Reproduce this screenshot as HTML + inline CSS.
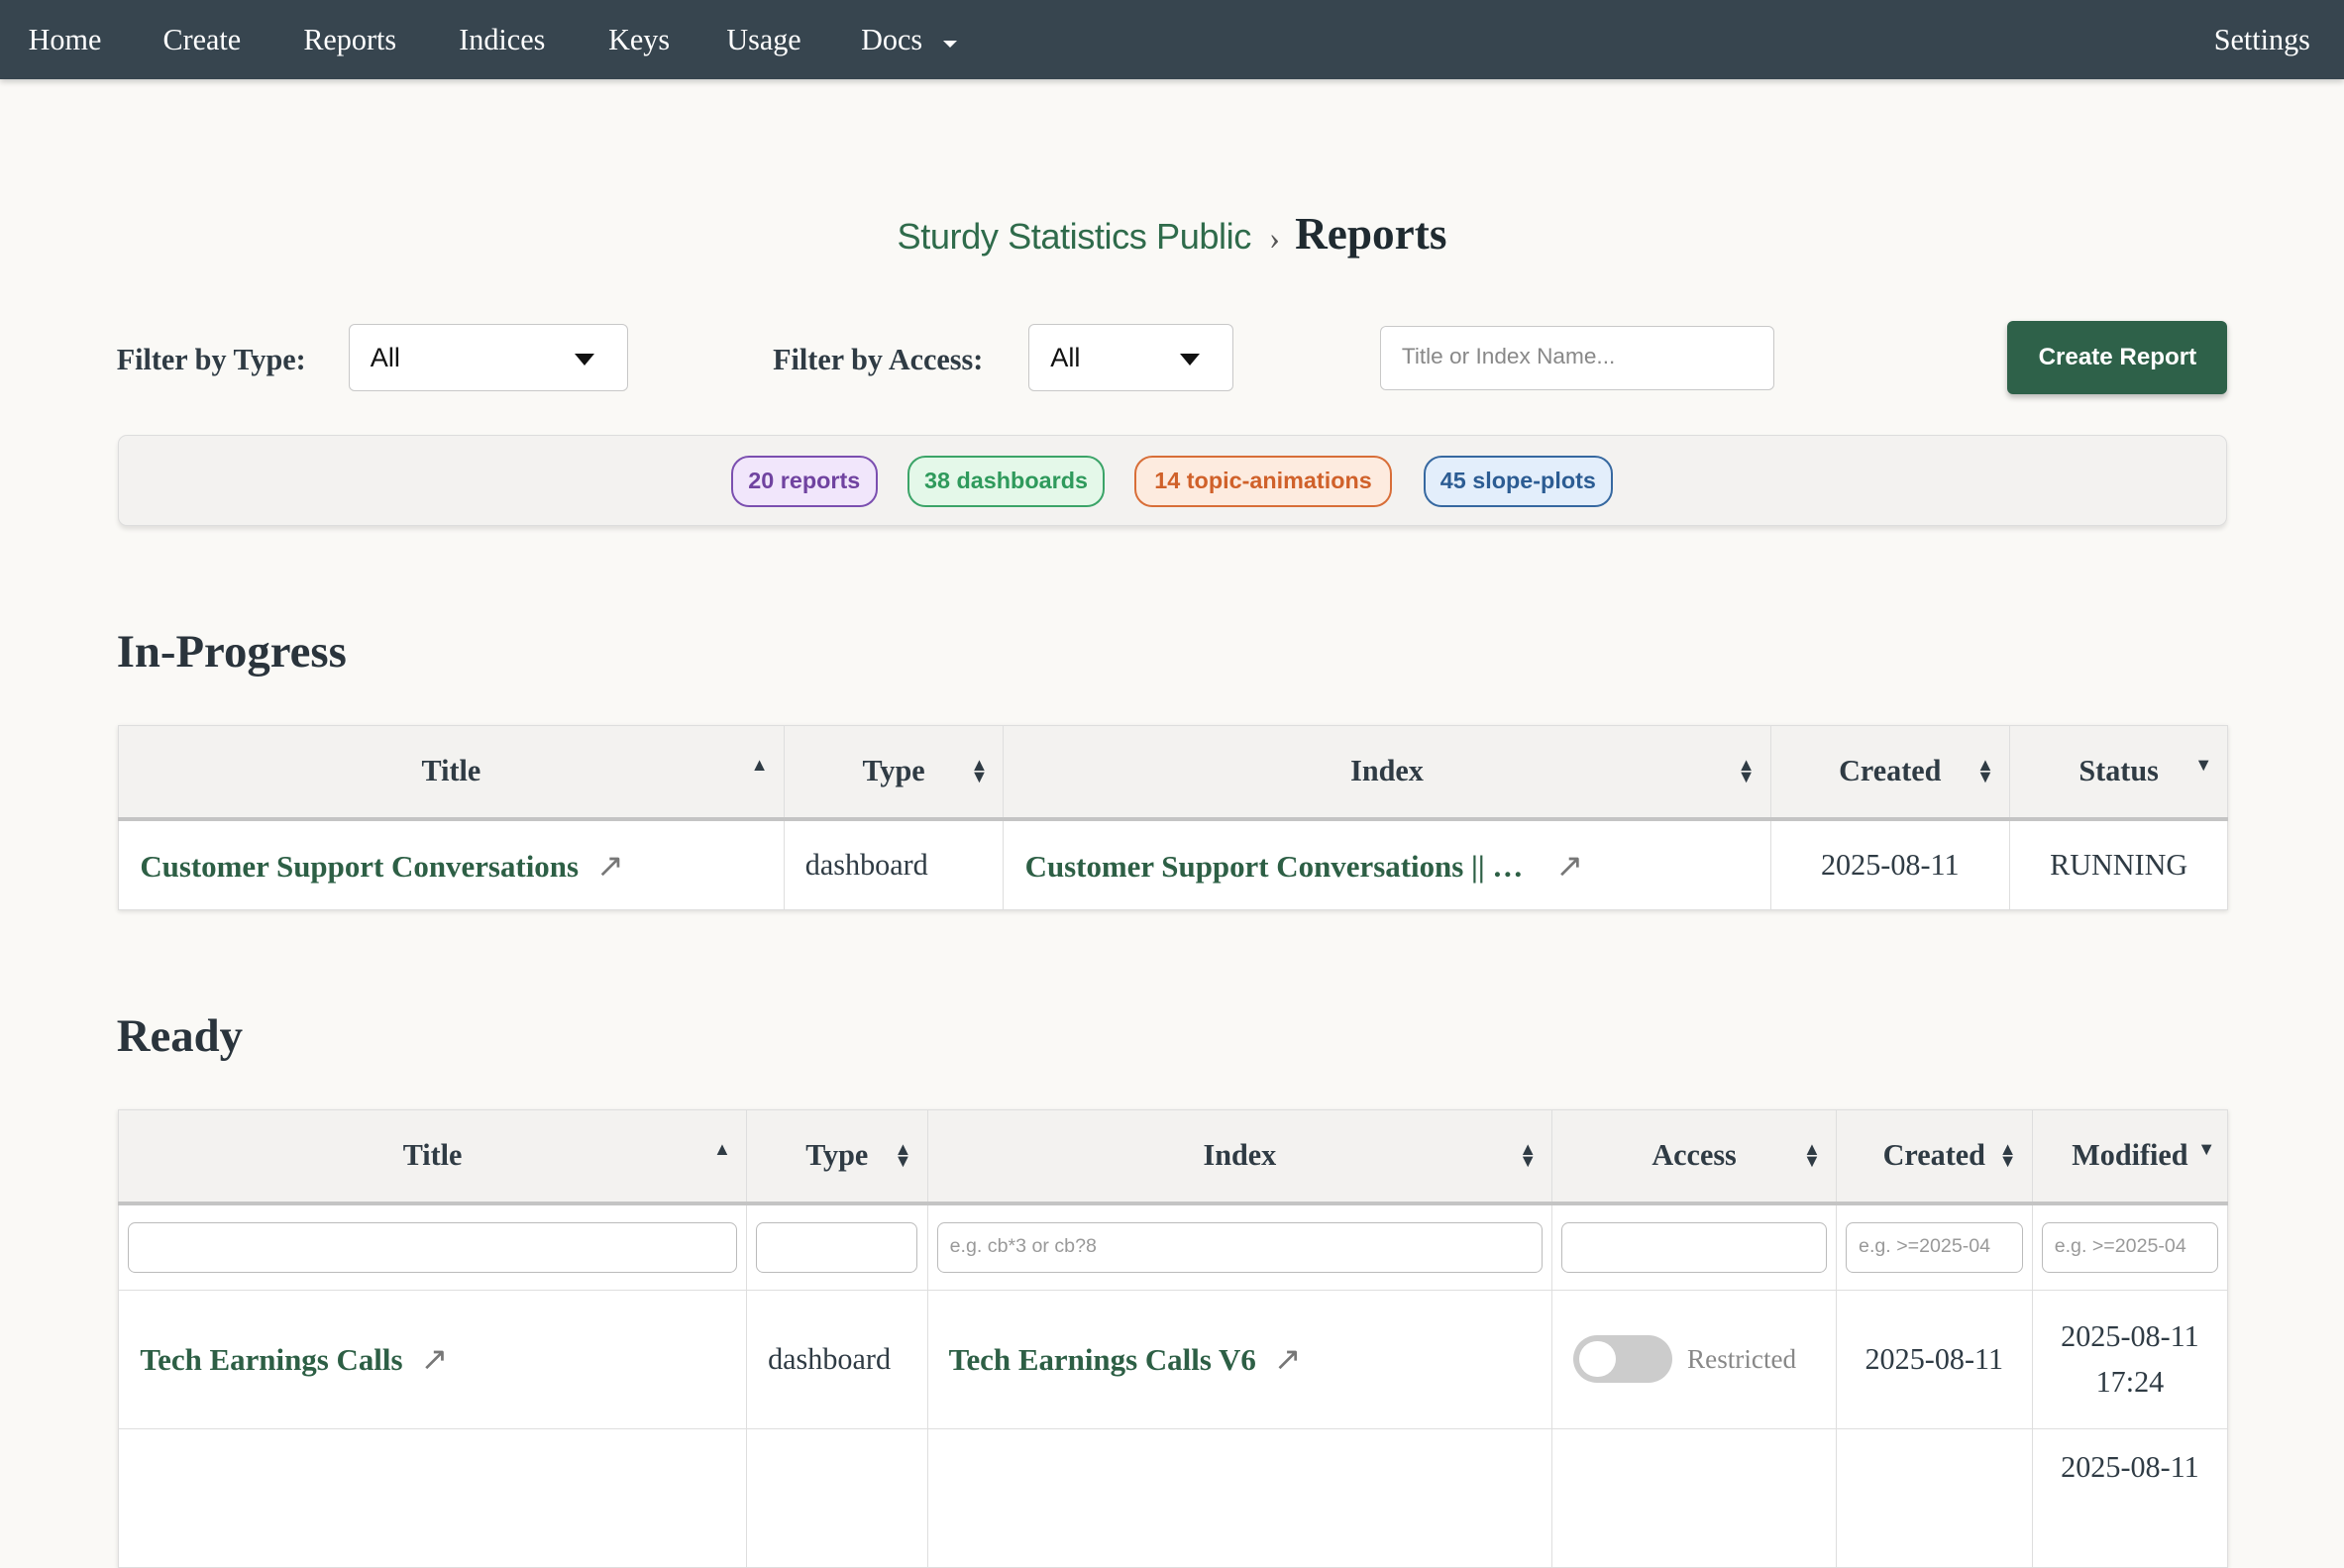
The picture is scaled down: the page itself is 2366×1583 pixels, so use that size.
<!DOCTYPE html>
<html><head><meta charset="utf-8"><style>
html{zoom:1.50893}
body{margin:0;width:1568px;height:983px;overflow:hidden;background:#faf9f6;font-family:"Liberation Serif",serif;color:#2f3b44;position:relative}
.nav{position:absolute;left:0;top:0;width:1568px;height:53px;background:#37454f;box-shadow:0 2px 4px rgba(0,0,0,.2)}
.nav span{position:absolute;top:15px;color:#fff;font-size:20px}
.a{position:absolute}
.sel{position:absolute;background:#fff;border:1px solid #c8c8c8;border-radius:4px;box-sizing:border-box;font-family:"Liberation Sans",sans-serif;font-size:18px;color:#111}
.sel b{position:absolute;right:22px;top:19px;border-left:7px solid transparent;border-right:7px solid transparent;border-top:8px solid #111}
.lbl{position:absolute;font-weight:bold;font-size:20px;color:#2f3b44}
.pill{position:absolute;top:305px;height:34px;box-sizing:border-box;border:1.5px solid;border-radius:12px;font-family:"Liberation Sans",sans-serif;font-weight:bold;font-size:15.5px;line-height:31px;text-align:center}
table{position:absolute;left:79px;border-collapse:collapse;table-layout:fixed;font-size:20px;box-shadow:0 1px 3px rgba(0,0,0,.12)}
td,th{border:1px solid #dedede;padding:0 14px;white-space:nowrap;overflow:hidden}
th{background:#f3f2f0;font-weight:bold;height:61px;border-bottom:3px solid #c4c4c4;position:relative}
td{background:#fff}
.lk{color:#2d5f45;font-weight:bold}
.ar{color:#777;font-weight:normal;margin-left:12px;font-size:22px}
.s{position:absolute;right:10px;top:22px;font-size:12px;line-height:8px}
.fi{height:34px;border:1px solid #bbb;border-radius:5px;box-sizing:border-box;background:#fff;font-family:"Liberation Sans",sans-serif;font-size:13px;color:#999;padding:8px;}
h2{position:absolute;margin:0;font-size:31px;font-weight:bold;color:#2a343c}
</style></head><body>
<div class="nav">
<span style="left:19px">Home</span><span style="left:109px">Create</span><span style="left:203px">Reports</span><span style="left:307px">Indices</span><span style="left:407px">Keys</span><span style="left:486px">Usage</span><span style="left:576px">Docs</span>
<span style="left:631px;top:27px;border-left:5px solid transparent;border-right:5px solid transparent;border-top:5px solid #fff"></span>
<span style="left:1481px">Settings</span>
</div>
<div class="a" style="left:0;width:1568px;top:139px;text-align:center;white-space:nowrap"><span style="font-family:'Liberation Sans',sans-serif;font-size:24px;color:#2f6b4b;letter-spacing:-0.3px">Sturdy Statistics Public</span><span style="font-size:22px;color:#555;margin:0 10px 0 12px">›</span><span style="font-size:30px;font-weight:bold;color:#1f2a30">Reports</span></div>

<div class="lbl" style="left:78px;top:229px">Filter by Type:</div>
<div class="sel" style="left:233px;top:217px;width:187px;height:45px;padding:11px 14px">All<b></b></div>
<div class="lbl" style="left:517px;top:229px">Filter by Access:</div>
<div class="sel" style="left:688px;top:217px;width:137px;height:45px;padding:11px 14px">All<b></b></div>
<div class="sel" style="left:923px;top:218px;width:264px;height:43px;padding:11px 14px;font-size:15px;color:#888">Title or Index Name...</div>
<div class="a" style="left:1343px;top:215px;width:147px;height:49px;background:#2e6149;border-radius:4px;color:#fff;font-family:'Liberation Sans',sans-serif;font-weight:bold;font-size:16px;line-height:49px;text-align:center;box-shadow:0 2px 4px rgba(0,0,0,.25)">Create Report</div>

<div class="a" style="left:79px;top:291px;width:1411px;height:61px;box-sizing:border-box;background:#f3f2f0;border:1px solid #ddd;border-radius:6px;box-shadow:0 2px 3px rgba(0,0,0,.1)"></div>
<div class="pill" style="left:489px;width:98px;color:#7043a0;background:#f1e6fb;border-color:#7b4fb0">20 reports</div>
<div class="pill" style="left:607px;width:132px;color:#2f9a5c;background:#e4f8e9;border-color:#3ba468">38 dashboards</div>
<div class="pill" style="left:759px;width:172px;color:#d0612a;background:#fdebdf;border-color:#d86e38">14 topic-animations</div>
<div class="pill" style="left:952px;width:127px;color:#2c5c93;background:#e3eefb;border-color:#3668a0">45 slope-plots</div>

<h2 style="left:78px;top:418px">In-Progress</h2>
<table style="top:485px;width:1411px">
<colgroup><col style="width:445px"><col style="width:147px"><col style="width:513px"><col style="width:160px"><col style="width:146px"></colgroup>
<tr><th>Title<span class="s">▲</span></th><th>Type<span class="s">▲<br>▼</span></th><th>Index<span class="s">▲<br>▼</span></th><th>Created<span class="s">▲<br>▼</span></th><th>Status<span class="s">▼</span></th></tr>
<tr style="height:61px"><td style="font-size:20.5px"><span class="lk">Customer Support Conversations</span><span class="ar">↗</span></td><td>dashboard</td><td style="font-size:20.5px"><span class="lk">Customer Support Conversations || …</span><span class="ar" style="margin-left:22px">↗</span></td><td style="text-align:center">2025-08-11</td><td style="text-align:center">RUNNING</td></tr>
</table>

<h2 style="left:78px;top:675px">Ready</h2>
<table style="top:742px;width:1411px">
<colgroup><col style="width:420px"><col style="width:121px"><col style="width:418px"><col style="width:190px"><col style="width:131px"><col style="width:131px"></colgroup>
<tr><th>Title<span class="s">▲</span></th><th>Type<span class="s">▲<br>▼</span></th><th>Index<span class="s">▲<br>▼</span></th><th>Access<span class="s">▲<br>▼</span></th><th>Created<span class="s">▲<br>▼</span></th><th style="padding:0 8px">Modified<span class="s" style="right:8px">▼</span></th></tr>
<tr style="height:58px"><td style="padding:0 6px"><div class="fi"></div></td><td style="padding:0 6px"><div class="fi"></div></td><td style="padding:0 6px"><div class="fi">e.g. cb*3 or cb?8</div></td><td style="padding:0 6px"><div class="fi"></div></td><td style="padding:0 6px"><div class="fi">e.g. &gt;=2025-04</div></td><td style="padding:0 6px"><div class="fi">e.g. &gt;=2025-04</div></td></tr>
<tr style="height:93px"><td style="font-size:20.5px"><span class="lk">Tech Earnings Calls</span><span class="ar">↗</span></td><td>dashboard</td><td style="font-size:20.5px"><span class="lk">Tech Earnings Calls V6</span><span class="ar">↗</span></td><td><span style="display:inline-block;vertical-align:middle;width:66px;height:32px;border-radius:16px;background:#ccc;position:relative"><span style="position:absolute;left:4px;top:4px;width:24px;height:24px;border-radius:50%;background:#fff"></span></span><span style="color:#888;font-size:18px;margin-left:10px;vertical-align:middle">Restricted</span></td><td style="text-align:center">2025-08-11</td><td style="text-align:center;line-height:31px">2025-08-11<br>17:24</td></tr>
<tr style="height:93px"><td></td><td></td><td></td><td></td><td></td><td style="text-align:center;vertical-align:top;padding-top:14px">2025-08-11</td></tr>
</table>
</body></html>
